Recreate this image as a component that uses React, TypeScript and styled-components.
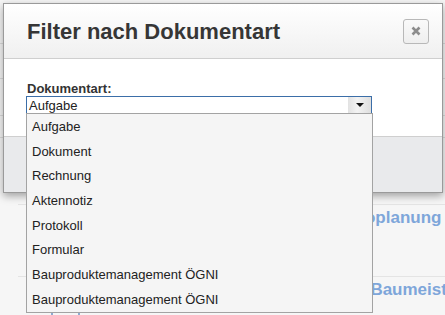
import React from 'react';
import styled, { createGlobalStyle } from 'styled-components';

const GlobalStyle = createGlobalStyle`
  html, body {
    margin: 0;
    padding: 0;
    background: #f6f6f6;
    font-family: 'Liberation Sans', Arial, sans-serif;
    overflow: hidden;
  }
`;

const Page = styled.div`
  position: relative;
  width: 445px;
  height: 315px;
  overflow: hidden;
`;

const TopArea = styled.div`
  height: 204px;
  padding-top: 43px;
  box-sizing: border-box;
`;

const TopLine = styled.div<{ $h: number }>`
  height: ${({ $h }) => $h}px;
  border-top: 1px solid #dcdcdc;
  box-sizing: border-box;
  padding: 12px 0 0 430px;
  font-size: 13px;
  color: #8fa7c4;
  white-space: nowrap;
`;

const List = styled.div`
  margin-left: 18px;
`;

const Row = styled.div`
  height: 72px;
  border-top: 1px solid #e4e4e4;
  box-sizing: border-box;
  padding: 3px 0 0 68px;
`;

const RowTitle = styled.div`
  font-size: 17px;
  font-weight: bold;
  color: #7ea6da;
  white-space: nowrap;
  line-height: 20px;
`;

const Tag = styled.span`
  display: inline-block;
  width: 8px;
  height: 9px;
  margin-left: 5px;
  background: #ecd3a4;
  border-radius: 1px;
  vertical-align: -1px;
`;

const SubLine = styled.div`
  display: flex;
  align-items: center;
  gap: 8px;
  margin: 11px 0 0 -35px;
  font-size: 13px;
  color: #9a9a9a;
  white-space: nowrap;
`;

const Thumb = styled.div`
  width: 25px;
  height: 16px;
  border: 2px solid #8eaad0;
  border-radius: 1px;
`;

const Modal = styled.div`
  position: absolute;
  left: 3px;
  top: 3px;
  width: 438px;
  border: 1px solid #9a9a9a;
  background: #fff;
  box-shadow: 0 3px 8px rgba(0, 0, 0, 0.35);
`;

const Header = styled.div`
  height: 54px;
  display: flex;
  align-items: center;
  justify-content: space-between;
  padding: 0 13px 0 23px;
  border-bottom: 1px solid #cfcfcf;
  background: linear-gradient(#ffffff, #f0f0f0);
`;

const Title = styled.h3`
  margin: 0;
  padding-top: 2px;
  font-size: 22px;
  font-weight: bold;
  color: #363636;
`;

const CloseButton = styled.button`
  width: 26px;
  height: 25px;
  padding: 0;
  display: flex;
  align-items: center;
  justify-content: center;
  border: 1px solid #b8b8b8;
  border-radius: 3px;
  background: linear-gradient(#fafafa, #eeeeee);
`;

const Body = styled.div`
  height: 77px;
  padding: 22px 0 0 23px;
  box-sizing: border-box;
`;

const Label = styled.label`
  display: block;
  font-size: 13px;
  font-weight: bold;
  color: #333;
  line-height: 15px;
`;

const Select = styled.div`
  position: relative;
  width: 346px;
  height: 18px;
  margin-left: -1px;
  border: 1px solid #3b6ea8;
  box-sizing: border-box;
  display: flex;
  align-items: center;
  justify-content: space-between;
  background: #fff;
`;

const SelectValue = styled.span`
  padding-left: 2px;
  font-size: 13px;
  color: #222;
`;

const ArrowBox = styled.span`
  width: 23px;
  height: 16px;
  display: flex;
  align-items: center;
  justify-content: center;
  background: linear-gradient(90deg, #e2e2e2, #f3f3f3 40%, #dedede);
`;

const Footer = styled.div`
  height: 55px;
  border-top: 1px solid #cfcfcf;
  background: #e9eaec;
`;

const Options = styled.ul`
  position: absolute;
  left: 26px;
  top: 113px;
  width: 347px;
  margin: 0;
  padding: 0;
  list-style: none;
  border: 1px solid #a3a3a3;
  box-sizing: border-box;
  background: #f5f5f5;
`;

const Option = styled.li`
  height: 24.7px;
  display: flex;
  align-items: center;
  padding-left: 5px;
  font-size: 13px;
  line-height: 15px;
  color: #222;
`;

const options = [
  'Aufgabe',
  'Dokument',
  'Rechnung',
  'Aktennotiz',
  'Protokoll',
  'Formular',
  'Bauproduktemanagement ÖGNI',
  'Bauproduktemanagement ÖGNI',
];

const App = () => (
  <Page>
    <GlobalStyle />
    <TopArea>
      <TopLine $h={35} />
      <TopLine $h={37}>te</TopLine>
      <TopLine $h={22} />
      <TopLine $h={67} />
    </TopArea>
    <List>
      <Row>
        <RowTitle>
          Los 3 Ausführung Rohbau — Makroplanung
          <Tag />
        </RowTitle>
      </Row>
      <Row>
        <RowTitle>Leistungsverzeichnisse — Gewerk Baumeister</RowTitle>
        <SubLine>
          <Thumb />
          Eingeschränkt · In Prüfung
        </SubLine>
      </Row>
    </List>

    <Modal>
      <Header>
        <Title>Filter nach Dokumentart</Title>
        <CloseButton aria-label="Schließen">
          <svg width="10" height="10" viewBox="0 0 10 10">
            <path d="M1.5 1.5 L8.5 8.5 M8.5 1.5 L1.5 8.5" stroke="#8c8c8c" strokeWidth="2.6" />
          </svg>
        </CloseButton>
      </Header>
      <Body>
        <Label>Dokumentart:</Label>
        <Select>
          <SelectValue>Aufgabe</SelectValue>
          <ArrowBox>
            <svg width="8" height="4" viewBox="0 0 8 4">
              <path d="M0 0 H8 L4 4 Z" fill="#111" />
            </svg>
          </ArrowBox>
        </Select>
      </Body>
      <Footer />
    </Modal>

    <Options>
      {options.map((o, i) => (
        <Option key={i}>{o}</Option>
      ))}
    </Options>
  </Page>
);

export default App;
